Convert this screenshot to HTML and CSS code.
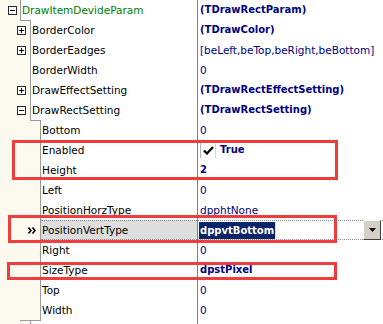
FILE: index.html
```html
<!DOCTYPE html>
<html lang="en">

<head>
    <meta charset="UTF-8">
    <meta name="viewport" content="width=device-width, initial-scale=1.0">
    <title>Object inspector</title>

    <link rel="stylesheet" href="styles.css">
</head>

<body>
    <div class="inspector">
        <div class="row lvl0">
            <div class="key">
                <div class="gutter"><span class="toggle minus"></span></div>
                <div class="name root">DrawItemDevideParam</div>
            </div>
            <div class="value bold">(TDrawRectParam)</div>
        </div>
        <div class="row lvl1 step">
            <div class="key">
                <div class="gutter"><span class="toggle plus"></span></div>
                <div class="name">BorderColor</div>
            </div>
            <div class="value bold">(TDrawColor)</div>
        </div>
        <div class="row lvl1">
            <div class="key">
                <div class="gutter"><span class="toggle plus"></span></div>
                <div class="name">BorderEadges</div>
            </div>
            <div class="value">[beLeft,beTop,beRight,beBottom]</div>
        </div>
        <div class="row lvl1">
            <div class="key">
                <div class="gutter"></div>
                <div class="name">BorderWidth</div>
            </div>
            <div class="value">0</div>
        </div>
        <div class="row lvl1">
            <div class="key">
                <div class="gutter"><span class="toggle plus"></span></div>
                <div class="name">DrawEffectSetting</div>
            </div>
            <div class="value bold">(TDrawRectEffectSetting)</div>
        </div>
        <div class="row lvl1">
            <div class="key">
                <div class="gutter"><span class="toggle minus"></span></div>
                <div class="name">DrawRectSetting</div>
            </div>
            <div class="value bold">(TDrawRectSetting)</div>
        </div>
        <div class="row lvl2 step">
            <div class="key">
                <div class="gutter"></div>
                <div class="name">Bottom</div>
            </div>
            <div class="value">0</div>
        </div>
        <div class="row lvl2">
            <div class="key">
                <div class="gutter"></div>
                <div class="name">Enabled</div>
            </div>
            <div class="value bold">
                <span class="check">
                    <svg width="11" height="9" viewBox="0 0 11 9"><path d="M1 4.5 L4 7.5 L10 1" fill="none" stroke="#000" stroke-width="2.2"/></svg>
                </span>
                True
            </div>
        </div>
        <div class="row lvl2">
            <div class="key">
                <div class="gutter"></div>
                <div class="name">Height</div>
            </div>
            <div class="value bold">2</div>
        </div>
        <div class="row lvl2">
            <div class="key">
                <div class="gutter"></div>
                <div class="name">Left</div>
            </div>
            <div class="value">0</div>
        </div>
        <div class="row lvl2">
            <div class="key">
                <div class="gutter"></div>
                <div class="name">PositionHorzType</div>
            </div>
            <div class="value">dpphtNone</div>
        </div>
        <div class="row lvl2 selected">
            <div class="key">
                <div class="gutter">
                    <svg class="marker" width="8" height="7" viewBox="0 0 8 7"><path d="M0.5 0.5 L3 3.5 L0.5 6.5 M4.5 0.5 L7 3.5 L4.5 6.5" fill="none" stroke="#000" stroke-width="1.6"/></svg>
                </div>
                <div class="name">PositionVertType</div>
            </div>
            <div class="value editor">
                <span class="sel">dppvtBottom</span>
                <span class="dropbtn">
                    <svg width="7" height="4" viewBox="0 0 7 4"><path d="M0 0 H7 L3.5 4 Z" fill="#000"/></svg>
                </span>
            </div>
        </div>
        <div class="row lvl2">
            <div class="key">
                <div class="gutter"></div>
                <div class="name">Right</div>
            </div>
            <div class="value">0</div>
        </div>
        <div class="row lvl2">
            <div class="key">
                <div class="gutter"></div>
                <div class="name">SizeType</div>
            </div>
            <div class="value bold">dpstPixel</div>
        </div>
        <div class="row lvl2">
            <div class="key">
                <div class="gutter"></div>
                <div class="name">Top</div>
            </div>
            <div class="value">0</div>
        </div>
        <div class="row lvl2">
            <div class="key">
                <div class="gutter"></div>
                <div class="name">Width</div>
            </div>
            <div class="value">0</div>
        </div>
        <div class="row lvl1 step tail">
            <div class="key">
                <div class="gutter"></div>
                <div class="name"></div>
            </div>
            <div class="value"></div>
        </div>

        <!-- red annotation boxes -->
        <div class="mark mark-enabled"></div>
        <div class="mark mark-vert"></div>
        <div class="mark mark-size"></div>
    </div>
</body>

</html>
```

FILE: styles.css
```css
* {
    box-sizing: border-box;
}

body {
    margin: 0;
    background-color: #fff;
    font-family: "DejaVu Sans", Verdana, sans-serif;
    font-size: 10.5px;
    overflow: hidden;
}

.inspector {
    position: relative;
    width: 383px;
    height: 324px;
    overflow: hidden;
}

.row {
    display: flex;
    height: 20px;
    line-height: 20px;
}

.key {
    display: flex;
    width: 197px;
    flex-shrink: 0;
}

.gutter {
    display: flex;
    justify-content: flex-end;
    align-items: center;
    padding-right: 4px;
    background-color: #fcf9ef;
    border-right: 1px solid #9a9a9a;
    flex-shrink: 0;
}

.lvl0 .gutter {
    width: 21px;
    padding-right: 3px;
}

.lvl1 .gutter {
    width: 31px;
}

.lvl2 .gutter {
    width: 41px;
}

/* horizontal piece of the tree line where the indent changes */
.lvl1.step .gutter {
    background: linear-gradient(#9a9a9a, #9a9a9a) no-repeat 20px 0 / 11px 1px, #fcf9ef;
}

.lvl2.step .gutter {
    background: linear-gradient(#9a9a9a, #9a9a9a) no-repeat 30px 0 / 11px 1px, #fcf9ef;
}

.tail .gutter {
    background: linear-gradient(#9a9a9a, #9a9a9a) no-repeat 30px 0 / 11px 1px, #fcf9ef;
    border-right: 1px solid #9a9a9a;
}

.tail .name {
    background: linear-gradient(#9a9a9a, #9a9a9a) no-repeat 0 0 / 10px 1px;
}

.name {
    flex: 1;
    padding-left: 1px;
    color: #000;
    white-space: nowrap;
}

.name.root {
    color: #008000;
}

.value {
    flex: 1;
    display: flex;
    align-items: center;
    border-left: 1px solid #808080;
    padding-left: 2px;
    color: #000080;
    white-space: nowrap;
}

.value.bold {
    font-weight: bold;
    font-size: 10px;
}

.toggle {
    position: relative;
    width: 9px;
    height: 9px;
    border: 1px solid #2a2a2a;
    background-color: #fff;
}

.toggle::before,
.toggle::after {
    content: "";
    position: absolute;
    background-color: #000;
}

.toggle::before {
    left: 1px;
    top: 3px;
    width: 5px;
    height: 1px;
}

.toggle.plus::after {
    left: 3px;
    top: 1px;
    width: 1px;
    height: 5px;
}

.check {
    display: flex;
    justify-content: center;
    align-items: center;
    width: 16px;
    height: 16px;
    margin-right: 4px;
    border: 1px solid #b8b8b8;
    border-right-color: #d8d8d8;
    border-bottom: none;
    background-color: #fff;
}

.selected .name {
    background-color: #dedede;
    border-top: 1px dotted #8a8a8a;
    border-bottom: 1px dotted #8a8a8a;
    line-height: 18px;
}

.marker {
    display: block;
}

.editor {
    background-color: #fff;
    border-top: 1px dotted #8a8a8a;
    border-bottom: 1px dotted #8a8a8a;
    padding-left: 1px;
    padding-right: 2px;
}

.sel {
    height: 17px;
    line-height: 17px;
    padding: 0 1px;
    background-color: #0a246a;
    color: #fff;
    font-weight: bold;
    font-size: 10px;
    border-right: 1px solid #f0e0a8;
}

.dropbtn {
    display: flex;
    justify-content: center;
    align-items: center;
    margin-left: auto;
    width: 18px;
    height: 20px;
    background-color: #d4d0c8;
    border: 1px solid;
    border-color: #fff #404040 #404040 #fff;
}

/* annotation frames drawn over the grid */
.mark {
    position: absolute;
    border: 3px solid #f03c3c;
}

.mark-enabled {
    left: 12px;
    top: 140px;
    width: 326px;
    height: 40px;
}

.mark-vert {
    left: 8px;
    top: 215px;
    width: 329px;
    height: 28px;
}

.mark-size {
    left: 7px;
    top: 262px;
    width: 330px;
    height: 18px;
}
```
